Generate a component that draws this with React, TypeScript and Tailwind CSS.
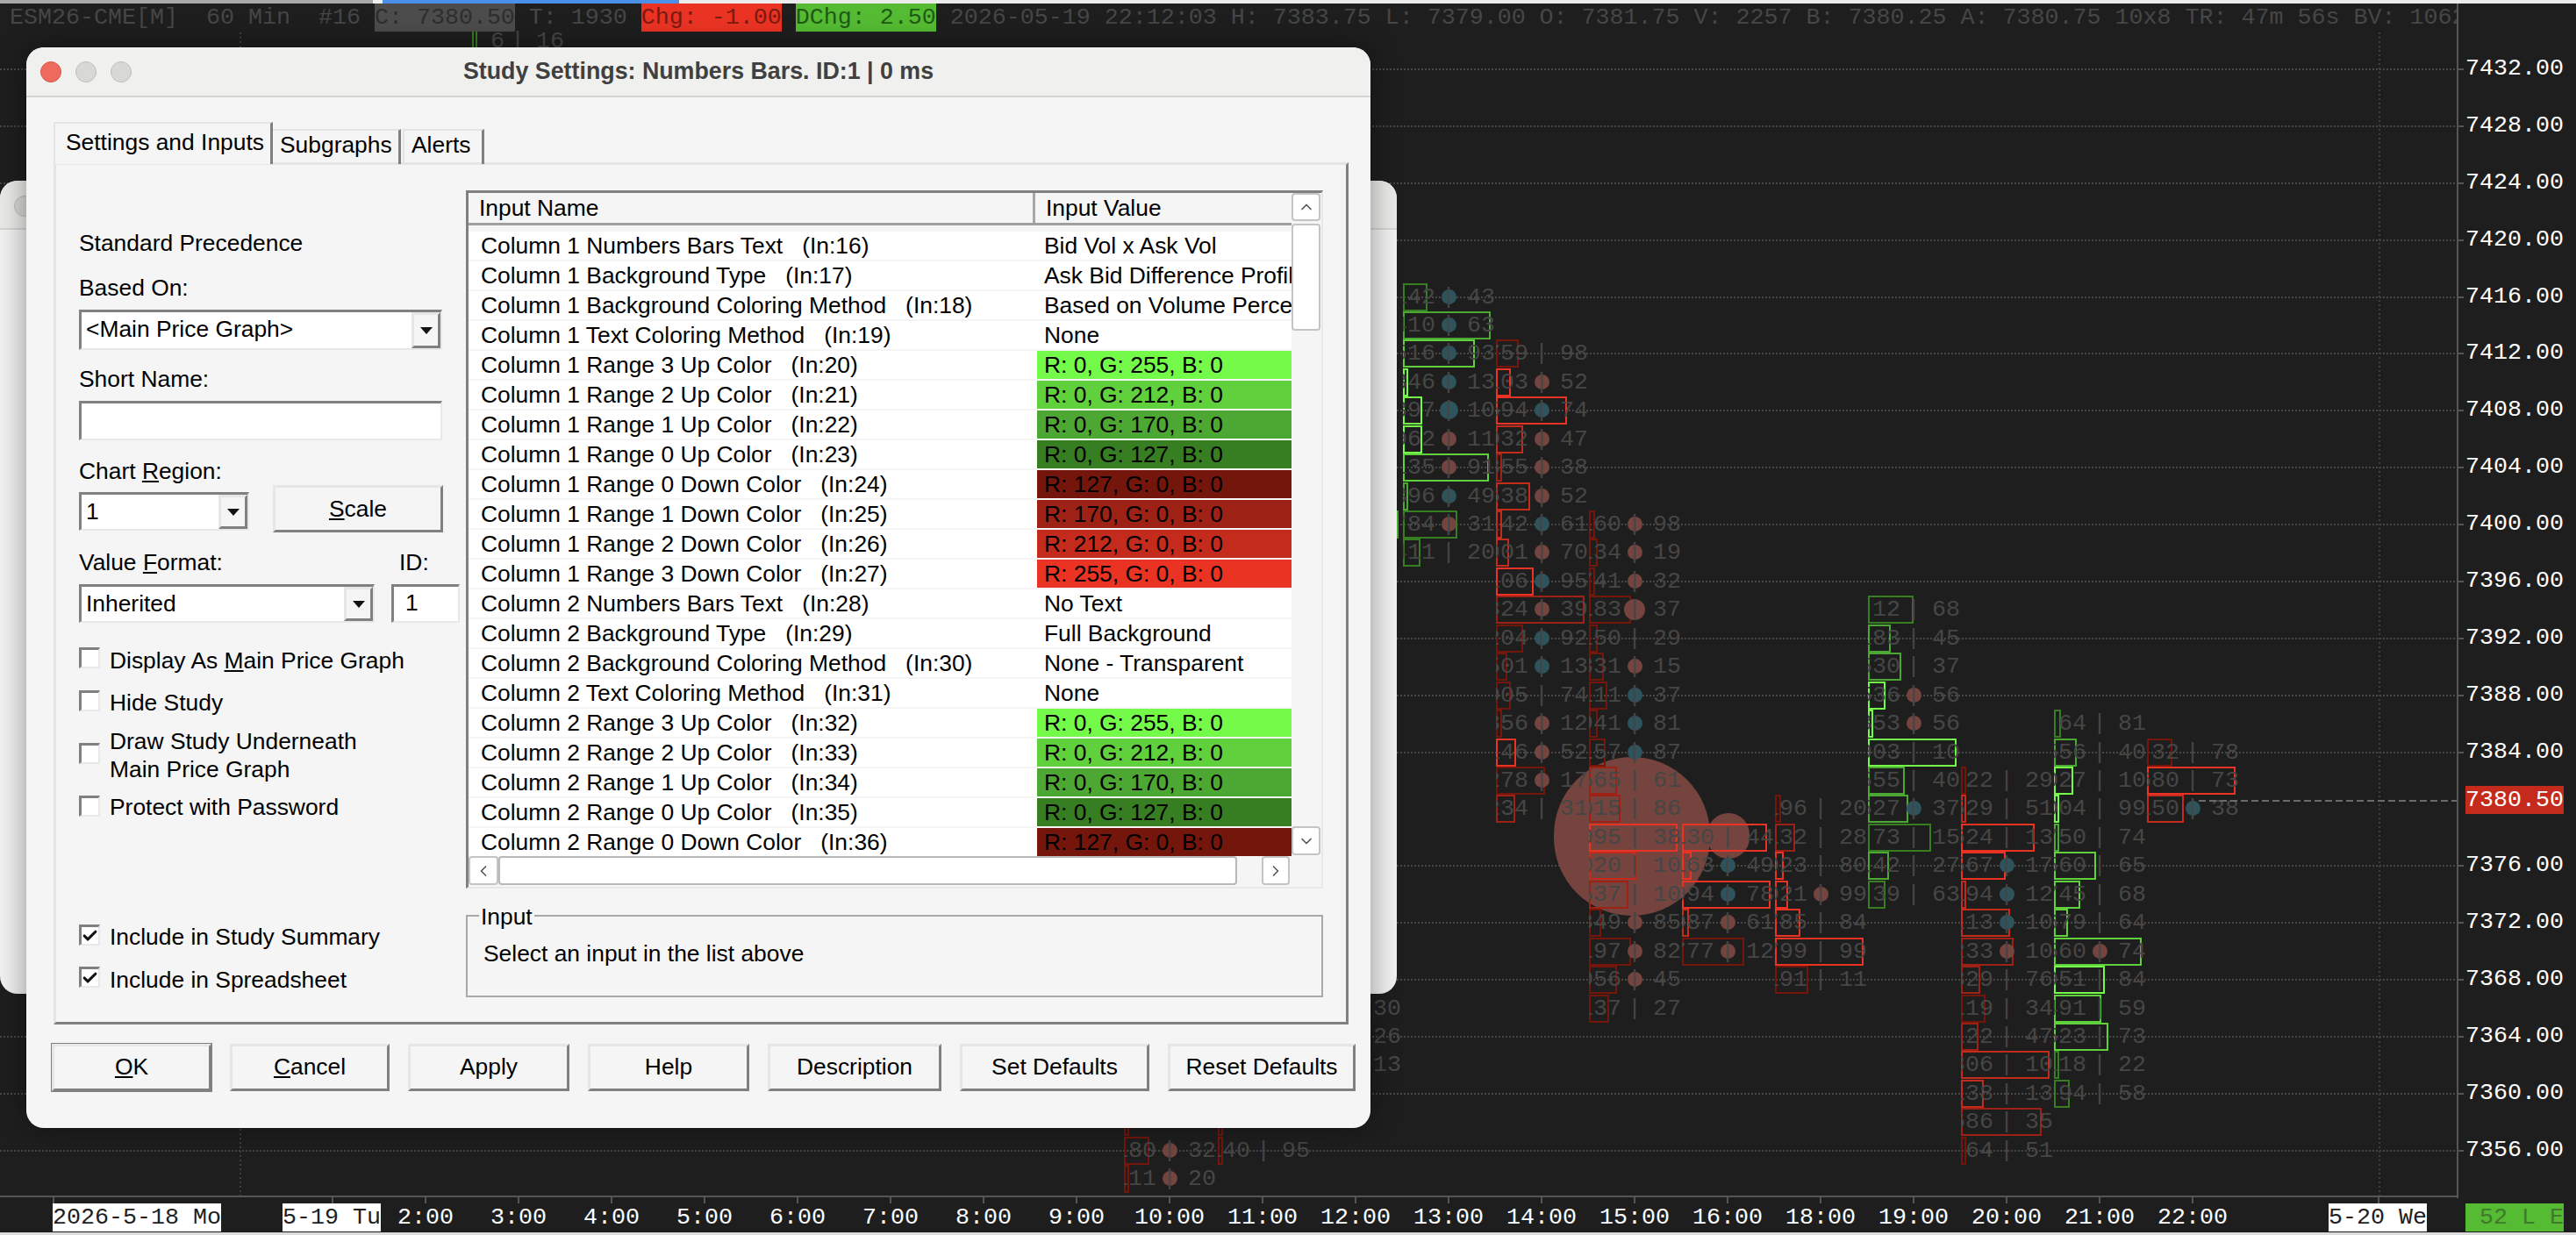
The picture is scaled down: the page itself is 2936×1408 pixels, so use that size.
import React from 'react';
import { Check, ChevronDown, ChevronLeft, ChevronRight, ChevronUp } from 'lucide-react';

const G255 = '#74fb4a';
const G212 = '#60d03d';
const G170 = '#4ca832';
const G127 = '#377e23';
const R255 = '#ea3323';
const R212 = '#c42b1c';
const R170 = '#9e2116';
const R127 = '#75160d';

const MONO = "font-['Liberation_Mono',monospace]";

const rowY = (r: number) => 338.5 + 32.44 * r;
const priceY = (p: number) => 79 + (7432 - p) * 16.22;

// [row, left number, mark (t teal, T big teal, b brown, B big brown, p pipe), right number, box width, box colour]
type Cell = [number, string, string, string, number, string];

const columns: { cx: number; rows: Cell[] }[] = [
  { cx: 590, rows: [[-9, '6', 'p', '16', 6, G127]] },
  { cx: 1333, rows: [[29, '', 'n', '', 6, R127], [30, '180', 'b', '32', 29, R127], [31, '111', 'b', '20', 6, R127]] },
  { cx: 1440, rows: [[29, '', 'n', '', 6, R127], [30, '140', 'p', '95', 6, R127]] },
  { cx: 1544, rows: [[8, '', 'n', '', 102, G170], [25, '', 'n', '30', 0, R127], [26, '', 'n', '26', 0, R127], [27, '', 'n', '13', 0, R127]] },
  {
    cx: 1651,
    rows: [
      [0, '142', 't', '43', 28, G127], [1, '410', 't', '63', 100, G170], [2, '516', 't', '93', 82, G212],
      [3, '346', 't', '13', 6, G255], [4, '397', 'T', '10', 22, G255], [5, '962', 'b', '11', 22, G255],
      [6, '135', 'b', '91', 98, G212], [7, '396', 't', '49', 6, G170], [8, '784', 'b', '31', 62, G127],
      [9, '411', 'p', '20', 20, G127],
    ],
  },
  {
    cx: 1757,
    rows: [
      [2, '759', 'p', '98', 26, R127], [3, '103', 'b', '52', 17, R255], [4, '594', 't', '74', 81, R255],
      [5, '032', 'b', '47', 31, R212], [6, '855', 'b', '38', 7, R170], [7, '638', 'b', '52', 39, R212],
      [8, '142', 't', '61', 7, R212], [9, '901', 'b', '70', 15, R212], [10, '106', 't', '95', 43, R255],
      [11, '324', 'b', '39', 101, R170], [12, '204', 't', '92', 31, R127], [13, '501', 't', '13', 13, R127],
      [14, '905', 'p', '74', 17, R127], [15, '356', 'b', '12', 7, R127], [16, '146', 'b', '52', 23, R255],
      [17, '278', 'b', '17', 56, R127], [18, '234', 'p', '31', 22, R170],
    ],
  },
  {
    cx: 1863,
    rows: [
      [8, '160', 'b', '98', 7, R127], [9, '134', 'b', '19', 10, R127], [10, '741', 'b', '32', 7, R127],
      [11, '183', 'B', '37', 48, R127], [12, '150', 'p', '29', 10, R127], [13, '331', 'b', '15', 17, R127],
      [14, '111', 't', '37', 21, R127], [15, '941', 't', '81', 10, R127], [16, '157', 't', '87', 19, R127],
      [17, '565', 'p', '61', 32, R170], [18, '015', 'p', '86', 36, R170], [19, '995', 'p', '38', 101, R255],
      [20, '020', 'p', '10', 54, R212], [21, '537', 'p', '10', 45, R170], [22, '849', 'b', '85', 14, R127],
      [23, '197', 'b', '82', 48, R127], [24, '056', 'b', '45', 32, R127], [25, '137', 'p', '27', 23, R127],
    ],
  },
  {
    cx: 1969,
    rows: [
      [19, '130', 'p', '44', 97, R255], [20, '163', 't', '49', 11, R255], [21, '994', 't', '78', 101, R255],
      [22, '087', 'b', '61', 8, R212], [23, '777', 'b', '12', 71, R127],
    ],
  },
  {
    cx: 2075,
    rows: [
      [18, '196', 'p', '20', 7, R127], [19, '132', 'p', '28', 23, R170], [20, '023', 'p', '80', 10, R255],
      [21, '021', 'b', '99', 15, R255], [22, '785', 'p', '84', 29, R255], [23, '799', 'p', '99', 101, R255],
      [24, '191', 'p', '11', 38, R127],
    ],
  },
  {
    cx: 2181,
    rows: [
      [11, '12', 'p', '68', 52, G127], [12, '183', 'p', '45', 26, G170], [13, '530', 'p', '37', 38, G170],
      [14, '536', 'b', '56', 20, G255], [15, '353', 'b', '56', 6, G255], [16, '903', 'p', '10', 101, G255],
      [17, '555', 'p', '40', 42, G170], [18, '527', 't', '37', 46, G170], [19, '73', 'p', '15', 72, G127],
      [20, '142', 'p', '27', 24, G170], [21, '39', 'p', '63', 20, G127],
    ],
  },
  {
    cx: 2287,
    rows: [
      [17, '22', 'p', '29', 6, R127], [18, '529', 'p', '51', 6, R212], [19, '624', 'p', '13', 84, R255],
      [20, '567', 't', '17', 51, R255], [21, '194', 't', '12', 6, R212], [22, '113', 't', '10', 56, R212],
      [23, '233', 'b', '10', 60, R170], [24, '829', 'p', '76', 22, R170], [25, '119', 'p', '34', 28, R127],
      [26, '122', 'p', '47', 20, R170], [27, '806', 'p', '10', 101, R212], [28, '138', 'p', '13', 26, R212],
      [29, '686', 'p', '35', 92, R170], [30, '64', 'p', '51', 6, R127],
    ],
  },
  {
    cx: 2393,
    rows: [
      [15, '64', 'p', '81', 8, G127], [16, '556', 'p', '40', 26, G170], [17, '027', 'p', '10', 22, G255],
      [18, '004', 'p', '99', 6, G255], [19, '750', 'p', '74', 6, G170], [20, '560', 'p', '65', 48, G212],
      [21, '745', 'p', '68', 30, G212], [22, '679', 'p', '64', 16, G212], [23, '560', 'b', '74', 100, G212],
      [24, '951', 'p', '84', 58, G255], [25, '491', 'p', '59', 54, G212], [26, '523', 'p', '73', 62, G212],
      [27, '118', 'p', '22', 6, G127], [28, '94', 'p', '58', 18, G127],
    ],
  },
  {
    cx: 2499,
    rows: [[16, '32', 'p', '78', 29, R127], [17, '680', 'p', '73', 101, R255], [18, '150', 't', '38', 42, R212]],
  },
];

const prices = [7432, 7428, 7424, 7420, 7416, 7412, 7408, 7404, 7400, 7396, 7392, 7388, 7384, 7376, 7372, 7368, 7364, 7360, 7356];
const hours = ['2:00', '3:00', '4:00', '5:00', '6:00', '7:00', '8:00', '9:00', '10:00', '11:00', '12:00', '13:00', '14:00', '15:00', '16:00', '18:00', '19:00', '20:00', '21:00', '22:00'];

const FootprintCell: React.FC<{ cx: number; cell: Cell }> = ({ cx, cell }) => {
  const [r, left, mark, right, w, color] = cell;
  const y = rowY(r);
  return (
    <>
      {w > 0 && (
        <div
          className="absolute h-8 border-2"
          style={{ left: cx - 52, top: y - 16, width: w, borderColor: color }}
        />
      )}
      <div className="absolute flex h-8 items-center text-[#464646]" style={{ left: cx - 52, top: y - 16 }}>
        <div className="flex w-[37px] justify-end overflow-hidden">{left}</div>
        <div className="relative flex h-8 w-[30px] items-center justify-center">
          {(mark === 't' || mark === 'b') && (
            <div className={`absolute top-[7px] size-[17px] rounded-full ${mark === 't' ? 'bg-[#2d545c]' : 'bg-[#75443e]'}`} />
          )}
          {mark === 'T' && <div className="absolute top-[5px] size-[21px] rounded-full bg-[#2d545c]" />}
          {mark === 'B' && <div className="absolute top-1 size-6 rounded-full bg-[#75443e]" />}
          {mark !== 'n' && <span className="relative">|</span>}
        </div>
        <div className="ml-1.5">{right}</div>
      </div>
    </>
  );
};

const Chart: React.FC = () => (
  <div className={`absolute inset-0 text-[26.67px] leading-8 ${MONO}`}>
    {prices.map((p) => (
      <div
        key={p}
        className="absolute left-0 h-0.5 w-[2801px] bg-[repeating-linear-gradient(90deg,#474747_0_2px,transparent_2px_4px)]"
        style={{ top: priceY(p) - 1 }}
      />
    ))}
    <div className="absolute left-[273px] top-[36px] h-[1328px] w-0.5 bg-[repeating-linear-gradient(0deg,#3f3f3f_0_2px,transparent_2px_5px)]" />
    <div className="absolute left-[2711px] top-[36px] h-[1328px] w-0.5 bg-[repeating-linear-gradient(0deg,#3f3f3f_0_2px,transparent_2px_5px)]" />

    {/* volume circles sit under the number boxes */}
    <div className="absolute left-[1771px] top-[863px] h-[181px] w-[178px] rounded-full bg-[#75443e]" />
    <div className="absolute left-[1946px] top-[927px] h-[52px] w-[48px] rounded-full bg-[#75443e]" />

    {columns.map((col) => col.rows.map((cell) => <FootprintCell key={`${col.cx}-${cell[0]}`} cx={col.cx} cell={cell} />))}

    <div className="absolute left-[2506px] top-[912px] h-0.5 w-[295px] bg-[repeating-linear-gradient(90deg,#6a6a6a_0_8px,transparent_8px_12px)]" />

    {/* price axis */}
    <div className="absolute left-[2800px] top-[4px] h-[1362px] w-0.5 bg-[#555555]" />
    {prices.map((p) => (
      <React.Fragment key={p}>
        <div className="absolute left-[2801px] h-0.5 w-[7px] bg-[#555555]" style={{ top: priceY(p) - 1 }} />
        <div className="absolute left-[2810px] text-white" style={{ top: priceY(p) - 17 }}>
          {p.toFixed(2)}
        </div>
      </React.Fragment>
    ))}
    <div className="absolute left-[2810px] top-[896px] flex h-8 w-[112px] items-center bg-[#c42b1c] text-white">7380.50</div>

    {/* time axis */}
    <div className="absolute left-0 top-[1363px] h-0.5 w-[2801px] bg-[#555555]" />
    {[61, 379, 2711, ...hours.map((_, i) => 485 + 106 * i)].map((x) => (
      <div key={x} className="absolute top-[1364px] h-2 w-0.5 bg-[#555555]" style={{ left: x - 1 }} />
    ))}
    {hours.map((h, i) => (
      <div key={h} className="absolute top-[1372px] flex h-8 w-[120px] justify-center text-white" style={{ left: 425 + 106 * i }}>
        {h}
      </div>
    ))}
    <div className="absolute left-[60px] top-[1372px] h-8 w-[192px] bg-white whitespace-pre text-[#1e1e1e]">2026-5-18 Mo</div>
    <div className="absolute left-[322px] top-[1372px] h-8 w-[112px] bg-white whitespace-pre text-[#1e1e1e]">5-19 Tu</div>
    <div className="absolute left-[2654px] top-[1372px] h-8 w-[112px] bg-white whitespace-pre text-[#1e1e1e]">5-20 We</div>
    <div className="absolute left-[2810px] top-[1372px] h-8 w-[112px] bg-[#55bb33] whitespace-pre text-[#3f7a2c]"> 52 L E</div>
  </div>
);

const Header: React.FC = () => (
  <div className="relative">
    <div className="flex h-1">
      <div className="h-full w-[425px] bg-[#a8a8a8]" />
      <div className="h-full w-[11px] bg-[#f0f0f0]" />
      <div className="h-full w-[338px] bg-[#4a8fe8]" />
      <div className="h-full flex-1 bg-[#ececec]" />
    </div>
    <div className={`flex h-8 w-[2800px] overflow-hidden whitespace-pre pl-[11px] text-[26.67px] leading-8 text-[#464646] ${MONO}`}>
      <span>{'ESM26-CME[M]  60 Min  #16 '}</span>
      <span className="bg-[#4c4c4c] text-[#2e2e2e]">C: 7380.50</span>
      <span>{' T: 1930 '}</span>
      <span className="bg-[#ea3323] text-[#7c1a10]">Chg: -1.00</span>
      <span> </span>
      <span className="bg-[#55bb33] text-[#1f5a15]">DChg: 2.50</span>
      <span>{' 2026-05-19 22:12:03 H: 7383.75 L: 7379.00 O: 7381.75 V: 2257 B: 7380.25 A: 7380.75 10x8 TR: 47m 56s BV: 1062'}</span>
    </div>
  </div>
);

const SUNKEN = 'border-t-[3px] border-l-[3px] border-t-[#808080] border-l-[#808080] border-r-2 border-b-2 border-r-[#e8e8e8] border-b-[#e8e8e8] bg-white';
const RAISED = 'border-t-[3px] border-l-[3px] border-t-[#e6e6e6] border-l-[#e6e6e6] border-r-[3px] border-b-[3px] border-r-[#808080] border-b-[#808080] bg-[#f5f5f5]';

const Select: React.FC<{ label: string; className: string }> = ({ label, className }) => (
  <div className={`flex items-stretch ${SUNKEN} ${className}`}>
    <div className="flex-1 pl-[5px] leading-[38px]">{label}</div>
    <div className={`flex w-[33px] items-center justify-center ${RAISED}`}>
      <svg width="16" height="10" viewBox="0 0 16 10">
        <polygon points="1,1 15,1 8,9" fill="#111111" />
      </svg>
    </div>
  </div>
);

const Box: React.FC<{ checked?: boolean; className: string }> = ({ checked, className }) => (
  <div className={`flex size-6 shrink-0 items-center justify-center ${SUNKEN} ${className}`}>
    {checked && <Check size={20} strokeWidth={4} color="#111111" />}
  </div>
);

const Btn: React.FC<{ w: string; children: React.ReactNode; strong?: boolean }> = ({ w, children, strong }) => (
  <div className={`flex h-[54px] items-center justify-center ${RAISED} ${w} ${strong ? 'outline outline-1 outline-[#808080]' : ''}`}>
    {children}
  </div>
);

type Row = [string, number, string, string?];

const rows: Row[] = [
  ['Column 1 Numbers Bars Text', 16, 'Bid Vol x Ask Vol'],
  ['Column 1 Background Type', 17, 'Ask Bid Difference Profile'],
  ['Column 1 Background Coloring Method', 18, 'Based on Volume Percentage'],
  ['Column 1 Text Coloring Method', 19, 'None'],
  ['Column 1 Range 3 Up Color', 20, 'R: 0, G: 255, B: 0', G255],
  ['Column 1 Range 2 Up Color', 21, 'R: 0, G: 212, B: 0', G212],
  ['Column 1 Range 1 Up Color', 22, 'R: 0, G: 170, B: 0', G170],
  ['Column 1 Range 0 Up Color', 23, 'R: 0, G: 127, B: 0', G127],
  ['Column 1 Range 0 Down Color', 24, 'R: 127, G: 0, B: 0', R127],
  ['Column 1 Range 1 Down Color', 25, 'R: 170, G: 0, B: 0', R170],
  ['Column 1 Range 2 Down Color', 26, 'R: 212, G: 0, B: 0', R212],
  ['Column 1 Range 3 Down Color', 27, 'R: 255, G: 0, B: 0', R255],
  ['Column 2 Numbers Bars Text', 28, 'No Text'],
  ['Column 2 Background Type', 29, 'Full Background'],
  ['Column 2 Background Coloring Method', 30, 'None - Transparent'],
  ['Column 2 Text Coloring Method', 31, 'None'],
  ['Column 2 Range 3 Up Color', 32, 'R: 0, G: 255, B: 0', G255],
  ['Column 2 Range 2 Up Color', 33, 'R: 0, G: 212, B: 0', G212],
  ['Column 2 Range 1 Up Color', 34, 'R: 0, G: 170, B: 0', G170],
  ['Column 2 Range 0 Up Color', 35, 'R: 0, G: 127, B: 0', G127],
  ['Column 2 Range 0 Down Color', 36, 'R: 127, G: 0, B: 0', R127],
];

const ScrollBtn: React.FC<{ className: string; children: React.ReactNode }> = ({ className, children }) => (
  <div className={`flex items-center justify-center rounded-[4px] border-2 border-[#c4c4c4] bg-white text-[#555555] ${className}`}>{children}</div>
);

const InputList: React.FC = () => (
  <div className={`flex h-[796px] w-[977px] ${SUNKEN} !bg-[#f5f5f5]`}>
    <div className="w-[938px] shrink-0">
      <div className="flex h-[37px] border-b-[3px] border-b-[#a0a0a0] leading-[34px]">
        <div className="w-[643px] pl-3">Input Name</div>
        <div className="w-[3px] bg-[#a8a8a8]" />
        <div className="flex-1 pl-3">Input Value</div>
      </div>
      <div className="mt-[7px] flex flex-col gap-0.5">
        {rows.map(([name, id, value, color]) => (
          <div key={id} className="flex h-8 bg-white leading-8">
            <div className="w-[648px] whitespace-pre pl-[14px]">{`${name}   (In:${id})`}</div>
            <div className="w-[290px] overflow-hidden whitespace-nowrap pl-2" style={{ backgroundColor: color }}>
              {value}
            </div>
          </div>
        ))}
      </div>
      <div className="flex h-[33px] items-stretch">
        <ScrollBtn className="w-[34px]"><ChevronLeft size={20} /></ScrollBtn>
        <div className="w-[842px] rounded-[4px] border-2 border-[#b8b8b8] bg-white" />
        <div className="w-7" />
        <ScrollBtn className="w-[32px]"><ChevronRight size={20} /></ScrollBtn>
      </div>
    </div>
    <div className="flex w-[33px] shrink-0 flex-col">
      <ScrollBtn className="h-8"><ChevronUp size={20} /></ScrollBtn>
      <div className="mt-[3px] h-[122px] rounded-[4px] border-2 border-[#c4c4c4] bg-white" />
      <div className="flex-1" />
      <ScrollBtn className="mb-[36px] h-[33px]"><ChevronDown size={20} /></ScrollBtn>
    </div>
  </div>
);

const LeftColumn: React.FC = () => (
  <div className="ml-[26px] mt-[73px] w-[434px] shrink-0 leading-8">
    <div>Standard Precedence</div>
    <div className="mt-[19px]">Based On:</div>
    <Select label="<Main Price Graph>" className="mt-[9px] h-[46px] w-[414px]" />
    <div className="mt-[17px]">Short Name:</div>
    <div className={`mt-[9px] h-[45px] w-[414px] ${SUNKEN}`} />
    <div className="mt-[19px]">Chart <span className="underline">R</span>egion:</div>
    <div className="flex w-[415px] justify-between">
      <Select label="1" className="mt-2 h-[44px] w-[194px]" />
      <Btn w="w-[194px]"><span><span className="underline">S</span>cale</span></Btn>
    </div>
    <div className="mt-[18px] flex">
      <div className="w-[365px]">Value <span className="underline">F</span>ormat:</div>
      <div>ID:</div>
    </div>
    <div className="mt-[9px] flex">
      <Select label="Inherited" className="h-[44px] w-[337px]" />
      <div className={`ml-[19px] h-[44px] w-[78px] pl-[13px] leading-[36px] ${SUNKEN}`}>1</div>
    </div>
    <div className="mt-[27px] flex gap-[11px]"><Box className="mt-px" /><div>Display As <span className="underline">M</span>ain Price Graph</div></div>
    <div className="mt-4 flex gap-[11px]"><Box className="mt-0.5" /><div>Hide Study</div></div>
    <div className="mt-3 flex gap-[11px]"><Box className="mt-[18px]" /><div>Draw Study Underneath<br />Main Price Graph</div></div>
    <div className="mt-[11px] flex gap-[11px]"><Box className="mt-[3px]" /><div>Protect with Password</div></div>
    <div className="mt-[116px] flex gap-[11px]"><Box checked className="mt-0.5" /><div>Include in Study Summary</div></div>
    <div className="mt-[17px] flex gap-[11px]"><Box checked className="mt-px" /><div>Include in Spreadsheet</div></div>
  </div>
);

const Dialog: React.FC = () => (
  <div className="absolute left-[30px] top-[54px] flex h-[1232px] w-[1532px] flex-col overflow-hidden rounded-[20px] bg-[#f5f5f5] text-[26.4px] text-black shadow-[0_0_32px_rgba(0,0,0,0.4)]">
    <div className="relative flex h-[57px] shrink-0 items-center justify-center border-b-2 border-b-[#d4d4d2] bg-[#f0f0ee]">
      <div className="absolute left-4 flex gap-4">
        <div className="size-6 rounded-full border border-[#d9564a] bg-[#ee6a5f]" />
        <div className="size-6 rounded-full border border-[#bdbdbb] bg-[#d8d8d6]" />
        <div className="size-6 rounded-full border border-[#bdbdbb] bg-[#d8d8d6]" />
      </div>
      <div className="text-[26.8px] font-bold text-[#404040]">Study Settings: Numbers Bars. ID:1 | 0 ms</div>
    </div>

    <div className="flex-1 px-[31px] pt-7">
      <div className="relative z-10 -mb-0.5 flex h-[48px] items-end">
        <div className="h-[48px] w-[250px] border-t-2 border-l-2 border-r-[3px] border-t-[#e4e4e4] border-l-[#e4e4e4] border-r-[#808080] bg-[#f5f5f5] pl-3 leading-[42px]">Settings and Inputs</div>
        <div className="h-[40px] w-[146px] border-t-2 border-r-[3px] border-t-[#e4e4e4] border-r-[#808080] pl-2 leading-[32px]">Subgraphs</div>
        <div className="ml-[2px] h-[40px] w-[93px] border-t-2 border-l-2 border-r-[3px] border-t-[#e4e4e4] border-l-[#e4e4e4] border-r-[#808080] pl-2 leading-[32px]">Alerts</div>
      </div>
      <div className="flex h-[983px] w-[1476px] border-t-[3px] border-l-[3px] border-t-[#e4e4e4] border-l-[#e4e4e4] border-r-[3px] border-b-[3px] border-r-[#808080] border-b-[#808080]">
        <LeftColumn />
        <div className="ml-[7px] mt-[29px] w-[977px] shrink-0">
          <InputList />
          <div className="relative mt-[30px] h-[94px] border-2 border-[#a8a8a8] pl-[18px] pt-[26px] leading-8">
            <div className="absolute -top-4 left-[13px] bg-[#f5f5f5] px-0.5">Input</div>
            Select an input in the list above
          </div>
        </div>
      </div>
      <div className="-ml-0.5 mt-[22px] flex w-[1486px] justify-between">
        <Btn w="w-[182px]" strong><span><span className="underline">O</span>K</span></Btn>
        <Btn w="w-[182px]"><span><span className="underline">C</span>ancel</span></Btn>
        <Btn w="w-[184px]">Apply</Btn>
        <Btn w="w-[184px]">Help</Btn>
        <Btn w="w-[198px]">Description</Btn>
        <Btn w="w-[216px]">Set Defaults</Btn>
        <Btn w="w-[214px]">Reset Defaults</Btn>
      </div>
    </div>
  </div>
);

const BackWindow: React.FC = () => (
  <div className="absolute left-0 top-[206px] h-[927px] w-[1592px] overflow-hidden rounded-[20px] bg-[#f0f0f0]">
    <div className="relative h-[56px] border-b-2 border-b-[#d4d4d2] bg-[#e9e9e7]">
      <div className="absolute left-4 top-[17px] size-6 rounded-full border border-[#bdbdbb] bg-[#d8d8d6]" />
    </div>
  </div>
);

export default function App() {
  return (
    <div className="relative h-[1408px] w-[2936px] overflow-hidden bg-[#1e1e1e] font-['Liberation_Sans',Arial,sans-serif]">
      <Chart />
      <Header />
      <BackWindow />
      <Dialog />
      <div className="absolute bottom-0 left-0 h-[3px] w-full bg-[#dcdcdc]" />
    </div>
  );
}
